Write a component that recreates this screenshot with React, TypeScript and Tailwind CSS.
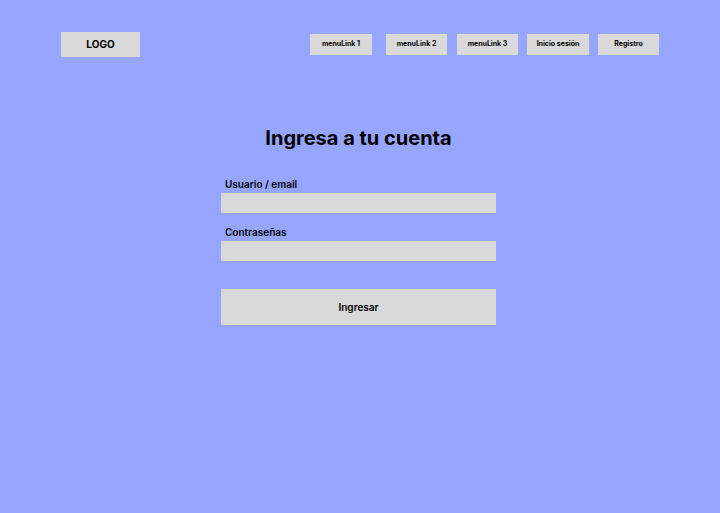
const LINKS = [
  { label: 'menuLink 1', cls: 'w-[62px] mr-[14px]' },
  { label: 'menuLink 2', cls: 'w-[61px] mr-[10px]' },
  { label: 'menuLink 3', cls: 'w-[61px] mr-[9px]' },
  { label: 'Inicio sesión', cls: 'w-[62px] mr-[9px]' },
  { label: 'Registro', cls: 'w-[61px]' },
];

export default function App() {
  return (
    <div className="min-h-screen w-full bg-[#96a6ff] font-['Inter',sans-serif] text-black">
      <header className="flex items-center justify-between pl-[61px] pr-[61px] pt-[32px]">
        <div className="flex h-[25px] w-[79px] items-center justify-center bg-[#d9d9d9] text-[10px] font-bold">
          LOGO
        </div>
        <nav className="flex items-center">
          {LINKS.map((link) => (
            <a
              key={link.label}
              href="#"
              className={`flex h-[21px] items-center justify-center bg-[#d9d9d9] text-[7px] font-bold ${link.cls}`}
            >
              {link.label}
            </a>
          ))}
        </nav>
      </header>

      <main className="ml-[221px] w-[275px] pt-[69px]">
        <h1 className="text-center text-[20px] font-bold leading-[24px]">Ingresa a tu cuenta</h1>

        <form className="mt-[28px] flex flex-col">
          <label className="pl-[4px] text-[10px] font-semibold leading-[12px]">Usuario / email</label>
          <input className="mt-[3px] h-[20px] w-full bg-[#d9d9d9] outline-none" />

          <label className="mt-[13px] pl-[4px] text-[10px] font-semibold leading-[12px]">Contraseñas</label>
          <input type="password" className="mt-[3px] h-[20px] w-full bg-[#d9d9d9] outline-none" />

          <button
            type="button"
            className="mt-[28px] flex h-[36px] w-full items-center justify-center bg-[#d9d9d9] text-[10px] font-semibold"
          >
            Ingresar
          </button>
        </form>
      </main>
    </div>
  );
}
